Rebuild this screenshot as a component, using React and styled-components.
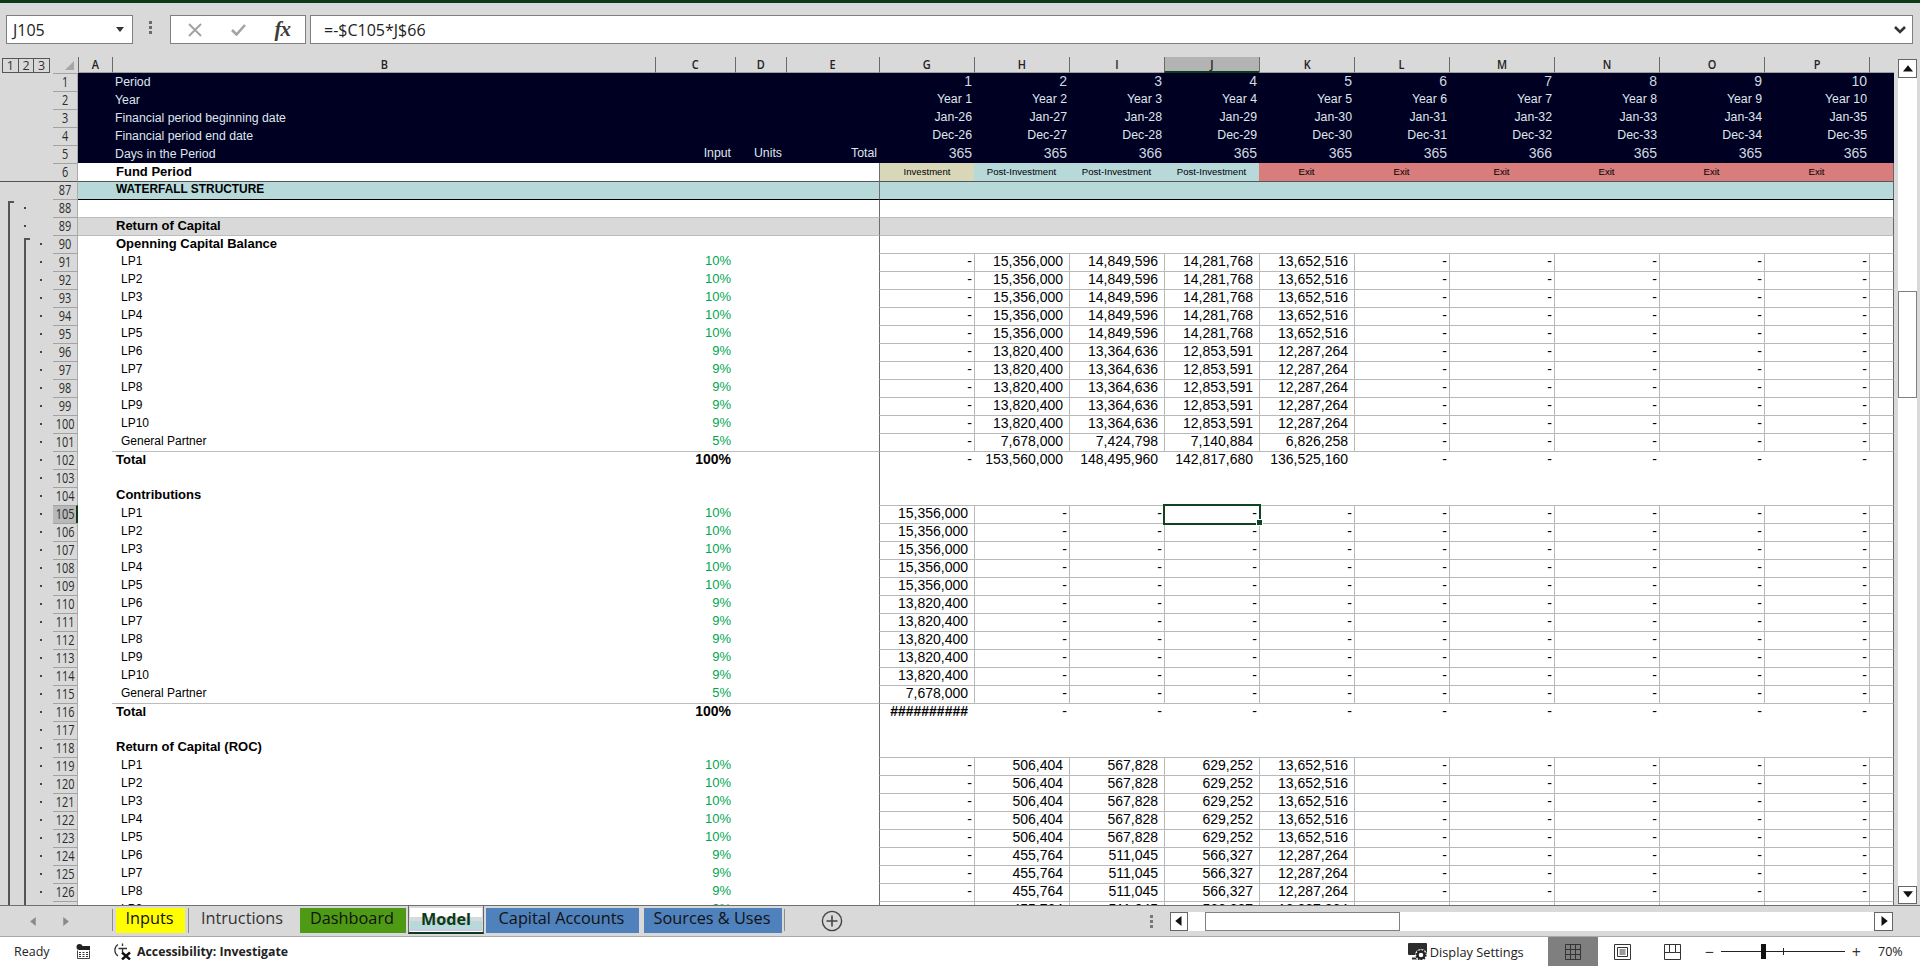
import React from 'react';
import styled, { createGlobalStyle } from 'styled-components';

const COLS = '53px 25px 34px 543px 80px 51px 93px repeat(6, 95px) repeat(4, 105px) 25px';
const GRID_LINE = '#b9b9b9';
const FREEZE_LINE = '#6e6e6e';
const UI_FONT = '"Open Sans", "Noto Sans", sans-serif';
const CELL_FONT = '"Liberation Sans", Arial, sans-serif';

const GlobalStyle = createGlobalStyle`
  html, body {
    margin: 0;
    height: 100%;
    overflow: hidden;
    background: #d9d9d9;
  }
  #root {
    height: 100%;
  }
`;

const Window = styled.div`
  display: flex;
  flex-direction: column;
  height: 100vh;
  background: #d9d9d9;
  font-family: ${UI_FONT};
  color: #222;
`;

const TitleStrip = styled.div`
  height: 3px;
  flex: none;
  background: #0c3b18;
`;

/* formula bar */
const FormulaBar = styled.div`
  flex: none;
  height: 54px;
  box-sizing: border-box;
  padding: 12px 7px 0 6px;
  display: flex;
  align-items: flex-start;
`;

const NameBox = styled.div`
  width: 127px;
  height: 29px;
  box-sizing: border-box;
  border: 1px solid #7f7f7f;
  background: #fff;
  display: flex;
  align-items: center;
  justify-content: space-between;
  padding: 0 8px 0 6px;
  font-size: 16px;
`;

const MenuDots = styled.div`
  display: flex;
  flex-direction: column;
  gap: 2px;
  flex: none;
  margin: ${p => p.$margin};
  span {
    width: 3px;
    height: 3px;
    background: ${p => p.$color || '#6b6b6b'};
  }
`;

const FxBox = styled.div`
  width: 136px;
  height: 29px;
  box-sizing: border-box;
  border: 1px solid #7f7f7f;
  background: #fff;
  display: flex;
  align-items: center;
  padding: 0 15px 0 17px;
  justify-content: space-between;
  margin-right: 4px;
`;

const FxText = styled.span`
  font-family: "Liberation Serif", serif;
  font-style: italic;
  font-weight: 700;
  font-size: 21px;
  color: #3c3c3c;
  letter-spacing: -1px;
  margin-left: 22px;
`;

const FormulaInput = styled.div`
  flex: 1;
  height: 29px;
  box-sizing: border-box;
  border: 1px solid #7f7f7f;
  background: #fff;
  display: flex;
  align-items: center;
  justify-content: space-between;
  padding: 0 3px 0 13px;
  font-size: 16px;
`;

/* sheet */
const Main = styled.div`
  flex: 1;
  min-height: 0;
  display: flex;
`;

const Sheet = styled.div`
  width: 1894px;
  flex: none;
  overflow: hidden;
  background: #fff;
`;

const GridRow = styled.div`
  display: grid;
  grid-template-columns: ${COLS};
  height: ${p => p.$height || 18}px;
`;

const OutlineButtons = styled.div`
  display: flex;
  margin: 1px 0 0 2px;
  height: 15px;
  width: 48px;
  box-sizing: border-box;
  border: 1px solid #555;
  span {
    flex: 1;
    font-size: 12.5px;
    line-height: 13px;
    text-align: center;
    border-left: 1px solid #555;
    color: #333;
  }
  span:first-child {
    border-left: none;
  }
`;

const CornerCell = styled.div`
  background: #d9d9d9;
  display: flex;
  align-items: flex-end;
  justify-content: flex-end;
  padding: 0 4px 3px 0;
`;

const HeaderBand = styled.div`
  background: #d9d9d9;
  display: flex;
`;

const ColHead = styled.div`
  box-sizing: border-box;
  background: ${p => (p.$active ? '#b3b3b3' : '#d9d9d9')};
  border-left: 1px solid #6a6a6a;
  border-bottom: ${p => (p.$active ? '2px solid #0c3b18' : '1px solid #9e9e9e')};
  display: flex;
  align-items: center;
  justify-content: center;
  font-size: 13px;
  line-height: 1;
  font-weight: 600;
  color: #222;
`;

const Squeeze = styled.span`
  display: inline-block;
  transform: scaleX(${p => p.$x});
`;

const Outline = styled.div`
  box-sizing: border-box;
  display: flex;
  align-items: center;
  background-color: #d9d9d9;
  background-repeat: no-repeat;
  background-image: ${p => p.$layers.map(() => 'linear-gradient(#555, #555)').join(', ') || 'none'};
  background-position: ${p => p.$layers.map(l => l.pos).join(', ') || '0 0'};
  background-size: ${p => p.$layers.map(l => l.size).join(', ') || 'auto'};
  border-top: ${p => (p.$top ? `1px solid ${p.$top}` : 'none')};
`;

const OutlineDot = styled.span`
  width: 2px;
  height: 2px;
  background: #444;
  margin-left: ${p => p.$x}px;
`;

const RowHead = styled.div`
  box-sizing: border-box;
  background: ${p => (p.$active ? '#b8b8b8' : '#d9d9d9')};
  border-top: 1px solid ${p => p.$top || '#a3a3a3'};
  border-right: ${p => (p.$active ? '2px solid #0c3b18' : '1px solid #ababab')};
  display: flex;
  align-items: center;
  justify-content: center;
  padding-bottom: 2px;
  font-size: 14px;
  line-height: 1;
  color: #2b2b2b;
`;

const Cell = styled.div`
  box-sizing: border-box;
  position: relative;
  min-width: 0;
  display: flex;
  align-items: center;
  white-space: nowrap;
  line-height: 1.1;
  font-family: ${CELL_FONT};
  padding-top: ${p => p.$sunk || 0}px;
  padding-bottom: ${p => p.$raised || 0}px;
  background: ${p => p.$fill || 'transparent'};
  color: ${p => p.$color || '#000'};
  border-top: ${p => (p.$top ? `1px solid ${p.$top}` : 'none')};
  border-left: ${p => (p.$left ? `1px solid ${p.$left}` : 'none')};
  border-right: ${p => (p.$right ? `1px solid ${p.$right}` : 'none')};
`;

const LabelCell = styled(Cell)`
  padding-left: ${p => p.$indent}px;
  font-size: ${p => p.$size}px;
  font-weight: ${p => (p.$bold ? 700 : 400)};
`;

const RightCell = styled(Cell)`
  justify-content: flex-end;
  padding-right: ${p => p.$pad}px;
  font-size: ${p => p.$size}px;
  font-weight: ${p => (p.$bold ? 700 : 400)};
`;

const SelectedCell = styled(RightCell)`
  z-index: 2;
  &::before {
    content: '';
    position: absolute;
    top: -2px;
    left: -2px;
    right: -2px;
    bottom: -2px;
    border: 2px solid #0e4420;
  }
  &::after {
    content: '';
    position: absolute;
    right: -4px;
    bottom: -3px;
    width: 5px;
    height: 5px;
    background: #0e4420;
    border: 1px solid #fff;
  }
`;

const BandCell = styled(Cell)`
  justify-content: center;
  font-size: 9.6px;
`;

/* vertical scrollbar */
const VScroll = styled.div`
  flex: 1;
  display: flex;
  flex-direction: column;
  padding: 2px 3px 1px 4px;
`;

const ScrollButton = styled.div`
  flex: none;
  width: ${p => p.$w || 19}px;
  height: ${p => p.$h || 19}px;
  box-sizing: border-box;
  border: 1px solid #666;
  background: #fff;
  display: flex;
  align-items: center;
  justify-content: center;
`;

const VTrack = styled.div`
  flex: 1;
  background: #fff;
  padding-top: 213px;
  display: flex;
  flex-direction: column;
`;

const VThumb = styled.div`
  height: 107px;
  box-sizing: border-box;
  border: 1px solid #808080;
  background: #fff;
`;

/* sheet tabs */
const TabBar = styled.div`
  flex: none;
  height: 32px;
  box-sizing: border-box;
  border-top: 1px solid #6f6f6f;
  border-bottom: 1px solid #a8a8a8;
  display: flex;
  align-items: stretch;
`;

const TabNav = styled.div`
  width: 112px;
  flex: none;
  display: flex;
  align-items: center;
  padding-left: 29px;
  gap: 23px;
  box-sizing: border-box;
`;

const Tab = styled.div`
  flex: none;
  width: ${p => p.$w}px;
  margin: 2px 0 3px ${p => p.$gap}px;
  box-sizing: border-box;
  padding: 0 2px 3px 0;
  background: ${p => p.$bg};
  display: flex;
  align-items: center;
  justify-content: center;
  font-size: 16.3px;
  line-height: 1.2;
  color: ${p => p.$color || '#111'};
  border-left: ${p => (p.$sep ? '1px solid #8c8c8c' : 'none')};
`;

const ActiveTab = styled.div`
  flex: none;
  width: 76px;
  margin: -1px 0 2px 2px;
  padding: 3px 1px 0;
  box-sizing: border-box;
  background-color: #fff;
  background-image: linear-gradient(#fff 0 12px, #d9d9d9 12px 16px, #b7d9da 16px 24px, #c9cbe4 24px 26px, #fff 26px);
  background-clip: content-box;
  background-origin: border-box;
  border-left: 1px solid #666;
  border-right: 1px solid #666;
  border-bottom: 2px solid #0c3b18;
  text-align: center;
  font-size: 16.2px;
  line-height: 22px;
  font-weight: 700;
  color: #0c3b18;
`;

const TabSep = styled.div`
  width: 1px;
  margin: 3px 0 5px ${p => p.$gap}px;
  background: #8c8c8c;
  flex: none;
`;

const AddSheet = styled.div`
  margin-left: 36px;
  display: flex;
  align-items: center;
`;

const HScroll = styled.div`
  margin-left: auto;
  margin-right: 27px;
  display: flex;
  align-items: center;
`;

const HTrack = styled.div`
  width: 686px;
  height: 19px;
  box-sizing: border-box;
  background: #fff;
  padding-left: 17px;
`;

const HThumb = styled.div`
  width: 195px;
  height: 19px;
  box-sizing: border-box;
  border: 1px solid #808080;
  background: #fff;
`;

/* status bar */
const StatusBar = styled.div`
  flex: none;
  height: 29px;
  background: #fff;
  display: flex;
  align-items: center;
  font-size: 12.5px;
  color: #222;
  white-space: nowrap;
`;

const Ready = styled.span`
  margin-left: 14px;
  width: 62px;
`;

const A11y = styled.div`
  display: flex;
  align-items: center;
  margin-left: 21px;
  gap: 4px;
  font-weight: 700;
  font-size: 12.3px;
`;

const RightStatus = styled.div`
  margin-left: auto;
  display: flex;
  align-items: center;
  height: 100%;
`;

const DisplaySettings = styled.div`
  display: flex;
  align-items: center;
  gap: 2px;
  margin-right: 24px;
  font-size: 12.8px;
`;

const ViewButton = styled.div`
  width: 50px;
  height: 100%;
  background: ${p => (p.$on ? '#7f7f7f' : 'transparent')};
  display: flex;
  align-items: center;
  justify-content: center;
`;

const ZoomControl = styled.div`
  display: flex;
  align-items: center;
  margin-left: 7px;
  font-size: 16px;
  line-height: 1;
  color: #333;
`;

const SliderTrack = styled.div`
  position: relative;
  width: 124px;
  height: 1px;
  margin: 0 7px;
  background: #222;
`;

const SliderThumb = styled.span`
  position: absolute;
  left: 40px;
  top: -7px;
  width: 5px;
  height: 15px;
  background: #111;
`;

const SliderTick = styled.span`
  position: absolute;
  left: 62px;
  top: -3px;
  width: 1px;
  height: 7px;
  background: #222;
`;

const ZoomValue = styled.span`
  width: 24px;
  margin: 0 18px 0 17px;
  font-size: 12.5px;
`;

const Tri = ({ dir = 'down', color = '#111', size = 8 }) => {
  const pts = {
    down: '0,1 8,1 4,6',
    up: '0,6 8,6 4,1',
    left: '6,0 6,8 1,4',
    right: '2,0 2,8 7,4',
  };
  return (
    <svg width={size} height={size} viewBox="0 0 8 8">
      <polygon points={pts[dir]} fill={color} />
    </svg>
  );
};

const CalcIcon = () => (
  <svg width="15" height="15" viewBox="0 0 15 15">
    <circle cx="3.5" cy="3" r="3" fill="#222" />
    <rect x="3" y="2" width="11" height="4" fill="#222" />
    <path d="M1.5 6.5V14.5H13.5V6.5" fill="none" stroke="#444" />
    <path d="M3 8.5h2M6.5 8.5h2M10 8.5h2M3 10.5h2M6.5 10.5h2M10 10.5h2M3 12.5h2M6.5 12.5h2M10 12.5h2" stroke="#333" />
  </svg>
);

const AccessIcon = () => (
  <svg width="21" height="17" viewBox="0 0 21 17">
    <path d="M6 1.5A6.8 6.8 0 0 0 6 13" fill="none" stroke="#333" strokeWidth="1.2" />
    <path d="M10.5 0.5V3M6.5 5.5H15M10.5 5.5V9" fill="none" stroke="#333" strokeWidth="1.3" />
    <path d="M10 9.5L18 16.5M18 9.5L10 16.5" stroke="#111" strokeWidth="2.4" />
  </svg>
);

const DisplayIcon = () => (
  <svg width="20" height="17" viewBox="0 0 20 17">
    <rect x="0" y="0" width="19" height="12" rx="1" fill="#2d2d2d" />
    <path d="M4 15.5H9" stroke="#2d2d2d" strokeWidth="2" />
    <circle cx="13" cy="12" r="6" fill="#fff" />
    <circle cx="13" cy="12" r="3.5" fill="none" stroke="#222" strokeWidth="2.4" />
    <circle cx="13" cy="12" r="4.8" fill="none" stroke="#222" strokeWidth="1.6" strokeDasharray="1.6 1.4" />
  </svg>
);

const GridViewIcon = () => (
  <svg width="16" height="16" viewBox="0 0 16 16" fill="none" stroke="#333">
    <path d="M.5.5h15v15H.5zM5.5.5v15M10.5.5v15M.5 5.5h15M.5 10.5h15" />
  </svg>
);

const PageIcon = () => (
  <svg width="17" height="16" viewBox="0 0 17 16" fill="none" stroke="#333">
    <path d="M.5.5h16v15H.5zM3.5 3.5h10v9h-10zM5.5 6h6M5.5 8h6M5.5 10h6" />
  </svg>
);

const BreakIcon = () => (
  <svg width="17" height="16" viewBox="0 0 17 16" fill="none" stroke="#333">
    <path d="M.5.5h16v15H.5zM5.5.5v8h6v-8M.5 8.5h5M11.5 8.5h5" />
  </svg>
);

const NAVY = '#000022';
const TEAL = '#b7d9da';
const GREEN = '#00a651';
const NAVY_TEXT = '#dfe6ec';

const blanks = Array(10).fill('');
const dashes = Array(10).fill('-');
const withFront = (front) => [...front, ...dashes.slice(front.length)];

const LP_NAMES = ['LP1', 'LP2', 'LP3', 'LP4', 'LP5', 'LP6', 'LP7', 'LP8', 'LP9', 'LP10', 'General Partner'];
const LP_PCT = ['10%', '10%', '10%', '10%', '10%', '9%', '9%', '9%', '9%', '9%', '5%'];

const OPENING_A = ['-', '15,356,000', '14,849,596', '14,281,768', '13,652,516'];
const OPENING_B = ['-', '13,820,400', '13,364,636', '12,853,591', '12,287,264'];
const OPENING_C = ['-', '7,678,000', '7,424,798', '7,140,884', '6,826,258'];
const ROC_A = ['-', '506,404', '567,828', '629,252', '13,652,516'];
const ROC_B = ['-', '455,764', '511,045', '566,327', '12,287,264'];

const byLp = (i, a, b, c) => (i < 5 ? a : i < 10 ? b : c);

const lpRows = (start, count, values) =>
  LP_NAMES.slice(0, count).map((name, i) => ({
    n: start + i,
    kind: 'lp',
    label: name,
    pct: LP_PCT[i],
    values: values(i),
  }));

const ROWS = [
  { n: 1, kind: 'navy', label: 'Period', values: ['1', '2', '3', '4', '5', '6', '7', '8', '9', '10'], big: true },
  { n: 2, kind: 'navy', label: 'Year', values: blanks.map((_, i) => `Year ${i + 1}`) },
  { n: 3, kind: 'navy', label: 'Financial period beginning date', values: blanks.map((_, i) => `Jan-${26 + i}`) },
  { n: 4, kind: 'navy', label: 'Financial period end date', values: blanks.map((_, i) => `Dec-${26 + i}`) },
  {
    n: 5,
    kind: 'navy',
    label: 'Days in the Period',
    c: 'Input',
    d: 'Units',
    e: 'Total',
    values: ['365', '365', '366', '365', '365', '365', '366', '365', '365', '365'],
    big: true,
  },
  { n: 6, kind: 'band', label: 'Fund Period' },
  { n: 87, kind: 'section', label: 'WATERFALL STRUCTURE' },
  { n: 88, kind: 'empty', top: '#000' },
  { n: 89, kind: 'group', label: 'Return of Capital' },
  { n: 90, kind: 'heading', label: 'Openning Capital Balance', top: '#bdbdbd' },
  ...lpRows(91, 11, i => withFront(byLp(i, OPENING_A, OPENING_B, OPENING_C))),
  {
    n: 102,
    kind: 'total',
    label: 'Total',
    pct: '100%',
    values: withFront(['-', '153,560,000', '148,495,960', '142,817,680', '136,525,160']),
  },
  { n: 103, kind: 'empty' },
  { n: 104, kind: 'heading', label: 'Contributions' },
  ...lpRows(105, 11, i => withFront([byLp(i, '15,356,000', '13,820,400', '7,678,000')])),
  { n: 116, kind: 'total', label: 'Total', pct: '100%', values: withFront(['##########']), hash: true },
  { n: 117, kind: 'empty' },
  { n: 118, kind: 'heading', label: 'Return of Capital (ROC)' },
  ...lpRows(119, 9, i => withFront(i < 5 ? ROC_A : ROC_B)),
];

const COLUMNS = ['A', 'B', 'C', 'D', 'E', 'G', 'H', 'I', 'J', 'K', 'L', 'M', 'N', 'O', 'P', ''];

const BANDS = [
  { text: 'Investment', fill: '#d8d8b8' },
  { text: 'Post-Investment', fill: TEAL },
  { text: 'Post-Investment', fill: TEAL },
  { text: 'Post-Investment', fill: TEAL },
  { text: 'Exit', fill: '#d87c7c' },
  { text: 'Exit', fill: '#d87c7c' },
  { text: 'Exit', fill: '#d87c7c' },
  { text: 'Exit', fill: '#d87c7c' },
  { text: 'Exit', fill: '#d87c7c' },
  { text: 'Exit', fill: '#d87c7c' },
];

const outlineFor = (n) => {
  const layers = [];
  if (n === 88) {
    layers.push({ pos: '8px 2px', size: '6px 2px' }, { pos: '8px 2px', size: '2px 100%' });
  } else if (n > 88) {
    layers.push({ pos: '8px 0', size: '2px 100%' });
  }
  if (n === 90) {
    layers.push({ pos: '24px 3px', size: '6px 2px' }, { pos: '24px 3px', size: '2px 100%' });
  } else if (n > 90) {
    layers.push({ pos: '24px 0', size: '2px 100%' });
  }
  return layers;
};

const dotFor = (n) => {
  if (n === 88 || n === 89) return 24;
  if (n >= 90) return 40;
  return null;
};

const labelProps = {
  navy: { $indent: 3, $size: 12.3, $color: NAVY_TEXT, $sunk: 1 },
  band: { $indent: 4, $size: 13, $bold: true },
  section: { $indent: 4, $size: 11.9, $bold: true, $raised: 1 },
  group: { $indent: 4, $size: 13, $bold: true, $raised: 1 },
  heading: { $indent: 4, $size: 13, $bold: true, $raised: 1 },
  total: { $indent: 4, $size: 13, $bold: true, $raised: 2 },
  lp: { $indent: 9, $size: 12, $raised: 2 },
  empty: { $indent: 4, $size: 12 },
};

const fills = { navy: NAVY, section: TEAL, group: '#d9d9d9' };

const SheetRow = ({ row }) => {
  const { n, kind } = row;
  const fill = fills[kind];
  let top = row.top;
  if (kind === 'section') top = '#555';
  if (kind === 'group') top = '#bdbdbd';
  const isRuled = kind === 'total';
  const isGrid = kind === 'lp';
  const leftTop = isRuled ? '#bdbdbd' : top;
  const rightTop = isGrid || isRuled ? GRID_LINE : top;
  const dot = dotFor(n);
  const freeze = kind === 'navy' ? undefined : FREEZE_LINE;
  const edge = kind === 'navy' ? undefined : '#666';

  return (
    <GridRow>
      <Outline $layers={outlineFor(n)} $top={kind === 'section' ? '#555' : undefined}>
        {dot && <OutlineDot $x={dot} />}
      </Outline>
      <RowHead $active={n === 105} $top={kind === 'section' ? '#555' : undefined}>
        <Squeeze $x={0.78}>{n}</Squeeze>
      </RowHead>
      <Cell $fill={fill} $top={isRuled ? undefined : top} />
      <LabelCell $fill={fill} $top={leftTop} {...labelProps[kind]}>{row.label}</LabelCell>
      {kind === 'navy' ? (
        <>
          <RightCell $fill={fill} $color={NAVY_TEXT} $size={12.3} $pad={4}>{row.c}</RightCell>
          <RightCell $fill={fill} $color={NAVY_TEXT} $size={12.3} $pad={4}>{row.d}</RightCell>
          <RightCell $fill={fill} $color={NAVY_TEXT} $size={12.3} $pad={2}>{row.e}</RightCell>
        </>
      ) : (
        <>
          <RightCell
            $fill={fill}
            $top={leftTop}
            $color={kind === 'total' ? '#000' : GREEN}
            $size={kind === 'total' ? 14 : 13}
            $bold={kind === 'total'}
            $pad={4}
            $raised={2}
          >
            {row.pct}
          </RightCell>
          <Cell $fill={fill} $top={leftTop} />
          <Cell $fill={fill} $top={leftTop} />
        </>
      )}
      {kind === 'band'
        ? BANDS.map((b, i) => (
            <BandCell key={i} $fill={b.fill} $left={i === 0 ? FREEZE_LINE : undefined}>
              {b.text}
            </BandCell>
          ))
        : blanks.map((_, i) => {
            const value = row.values ? row.values[i] : '';
            const left = i === 0 ? freeze : isGrid ? GRID_LINE : undefined;
            if (kind === 'navy') {
              return (
                <RightCell key={i} $fill={fill} $color={row.big ? '#cfd8e0' : NAVY_TEXT} $size={row.big ? 14 : 12.3} $pad={2}>
                  {value}
                </RightCell>
              );
            }
            const Comp = n === 105 && i === 3 ? SelectedCell : RightCell;
            return (
              <Comp
                key={i}
                $fill={fill}
                $top={rightTop}
                $left={left}
                $size={14}
                $bold={row.hash && i === 0}
                $pad={value === '-' ? 2 : 6}
                $raised={2}
              >
                {value}
              </Comp>
            );
          })}
      <Cell
        $fill={kind === 'band' ? '#d87c7c' : fill}
        $top={kind === 'band' ? undefined : rightTop}
        $left={isGrid ? GRID_LINE : undefined}
        $right={edge}
      />
    </GridRow>
  );
};

const TABS = [
  { name: 'Inputs', w: 69, gap: 3, bg: '#ffff00' },
  { name: 'Intructions', w: 109, gap: 3, bg: 'transparent', color: '#333', sep: true },
  { name: 'Dashboard', w: 106, gap: 3, bg: '#4e9a14' },
];

const TABS_AFTER = [
  { name: 'Capital Accounts', w: 153, gap: 2, bg: '#4f81bd' },
  { name: 'Sources & Uses', w: 138, gap: 5, bg: '#4f81bd' },
];

export default function App() {
  return (
    <Window>
      <GlobalStyle />
      <TitleStrip />
      <FormulaBar>
        <NameBox>
          J105
          <Tri size={8} color="#333" />
        </NameBox>
        <MenuDots $margin="6px 18px 0 16px">
          <span />
          <span />
          <span />
        </MenuDots>
        <FxBox>
          <svg width="14" height="14" viewBox="0 0 14 14" stroke="#a3a3a3" strokeWidth="2" fill="none">
            <path d="M1 1L13 13M13 1L1 13" />
          </svg>
          <svg width="15" height="13" viewBox="0 0 15 13" stroke="#a3a3a3" strokeWidth="2.6" fill="none" style={{ marginLeft: 22 }}>
            <path d="M1 7L5.5 11.5L14 2" />
          </svg>
          <FxText>fx</FxText>
        </FxBox>
        <FormulaInput>
          <span>=-$C105*J$66</span>
          <svg width="14" height="10" viewBox="0 0 14 10" stroke="#333" strokeWidth="2.6" fill="none" style={{ marginRight: 2 }}>
            <path d="M2 2L7 7L12 2" />
          </svg>
        </FormulaInput>
      </FormulaBar>
      <Main>
        <Sheet>
          <GridRow $height={16}>
            <HeaderBand>
              <OutlineButtons>
                <span>1</span>
                <span>2</span>
                <span>3</span>
              </OutlineButtons>
            </HeaderBand>
            <CornerCell>
              <svg width="9" height="9" viewBox="0 0 9 9">
                <polygon points="9,0 9,9 0,9" fill="#a6a6a6" />
              </svg>
            </CornerCell>
            {COLUMNS.map((c, i) => (
              <ColHead key={i} $active={c === 'J'}>
                <Squeeze $x={0.84}>{c}</Squeeze>
              </ColHead>
            ))}
          </GridRow>
          {ROWS.map(row => (
            <SheetRow key={row.n} row={row} />
          ))}
        </Sheet>
        <VScroll>
          <ScrollButton>
            <Tri dir="up" size={10} />
          </ScrollButton>
          <VTrack>
            <VThumb />
          </VTrack>
          <ScrollButton $h={18}>
            <Tri size={10} />
          </ScrollButton>
        </VScroll>
      </Main>
      <TabBar>
        <TabNav>
          <Tri dir="left" size={9} color="#8a8a8a" />
          <Tri dir="right" size={9} color="#8a8a8a" />
        </TabNav>
        <TabSep $gap={0} />
        {TABS.map(t => (
          <Tab key={t.name} $w={t.w} $gap={t.gap} $bg={t.bg} $color={t.color} $sep={t.sep}>
            {t.name}
          </Tab>
        ))}
        <ActiveTab>Model</ActiveTab>
        {TABS_AFTER.map(t => (
          <Tab key={t.name} $w={t.w} $gap={t.gap} $bg={t.bg}>
            {t.name}
          </Tab>
        ))}
        <TabSep $gap={2} />
        <AddSheet>
          <svg width="22" height="22" viewBox="0 0 22 22" fill="none" stroke="#444">
            <circle cx="11" cy="11" r="9.6" strokeWidth="1.4" />
            <path d="M11 5.5V16.5M5.5 11H16.5" strokeWidth="1.6" />
          </svg>
        </AddSheet>
        <HScroll>
          <MenuDots $margin="0 17px 0 0" $color="#777">
            <span />
            <span />
            <span />
          </MenuDots>
          <ScrollButton $w={18}>
            <Tri dir="left" size={10} />
          </ScrollButton>
          <HTrack>
            <HThumb />
          </HTrack>
          <ScrollButton>
            <Tri dir="right" size={10} />
          </ScrollButton>
        </HScroll>
      </TabBar>
      <StatusBar>
        <Ready>Ready</Ready>
        <CalcIcon />
        <A11y>
          <AccessIcon />
          Accessibility: Investigate
        </A11y>
        <RightStatus>
          <DisplaySettings>
            <DisplayIcon />
            Display Settings
          </DisplaySettings>
          <ViewButton $on>
            <GridViewIcon />
          </ViewButton>
          <ViewButton>
            <PageIcon />
          </ViewButton>
          <ViewButton>
            <BreakIcon />
          </ViewButton>
          <ZoomControl>
            <span>−</span>
            <SliderTrack>
              <SliderThumb />
              <SliderTick />
            </SliderTrack>
            <span>+</span>
          </ZoomControl>
          <ZoomValue>70%</ZoomValue>
        </RightStatus>
      </StatusBar>
    </Window>
  );
}
